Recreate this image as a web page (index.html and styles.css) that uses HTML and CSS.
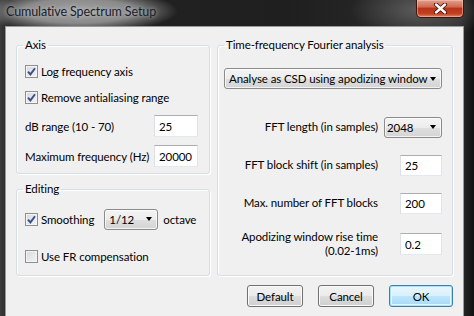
FILE: index.html
```html
<!DOCTYPE html>
<html lang="en">
<head>
    <meta charset="UTF-8">
    <title>Cumulative Spectrum Setup</title>
    <link rel="stylesheet" href="styles.css">
</head>
<body>
    <div class="window">
        <div class="titlebar">
            <span class="title">Cumulative Spectrum Setup</span>
            <div class="close">
                <svg width="15" height="11" viewBox="0 0 15 11">
                    <path d="M3 1.5 L12 9.5 M12 1.5 L3 9.5" stroke="#4a1208" stroke-width="4.2" stroke-linecap="round"/>
                    <path d="M3 1.5 L12 9.5 M12 1.5 L3 9.5" stroke="#fff" stroke-width="2.4" stroke-linecap="round"/>
                </svg>
            </div>
        </div>

        <div class="client">
            <div class="groups">
                <div class="left-col">
                    <fieldset class="group">
                        <legend>Axis</legend>
                        <div class="axis-body">
                            <div class="check-row">
                                <span class="check on"><svg width="9" height="9" viewBox="0 0 9 9"><path d="M1 4.6 L3.4 7.4 L8 1.2" fill="none" stroke="#3b4f86" stroke-width="1.9"/></svg></span>
                                <span>Log frequency axis</span>
                            </div>
                            <div class="check-row">
                                <span class="check on"><svg width="9" height="9" viewBox="0 0 9 9"><path d="M1 4.6 L3.4 7.4 L8 1.2" fill="none" stroke="#3b4f86" stroke-width="1.9"/></svg></span>
                                <span>Remove antialiasing range</span>
                            </div>
                            <div class="field-rows">
                                <div class="field-row">
                                    <span>dB range (10 - 70)</span>
                                    <input class="text wide" type="text" value="25">
                                </div>
                                <div class="field-row">
                                    <span>Maximum frequency (Hz)</span>
                                    <input class="text wide" type="text" value="20000">
                                </div>
                            </div>
                        </div>
                    </fieldset>

                    <fieldset class="group">
                        <legend>Editing</legend>
                        <div class="edit-body">
                            <div class="check-row">
                                <span class="check on"><svg width="9" height="9" viewBox="0 0 9 9"><path d="M1 4.6 L3.4 7.4 L8 1.2" fill="none" stroke="#3b4f86" stroke-width="1.9"/></svg></span>
                                <span>Smoothing</span>
                                <div class="combo smooth"><span>1/12</span><span class="arrow"></span></div>
                                <span>octave</span>
                            </div>
                            <div class="check-row">
                                <span class="check"></span>
                                <span>Use FR compensation</span>
                            </div>
                        </div>
                    </fieldset>
                </div>

                <fieldset class="group">
                    <legend>Time-frequency Fourier analysis</legend>
                    <div class="fft-body">
                        <div class="combo"><span>Analyse as CSD using apodizing window</span><span class="arrow"></span></div>
                        <div class="fft-grid">
                            <span class="label">FFT length (in samples)</span>
                            <div class="combo length"><span>2048</span><span class="arrow"></span></div>

                            <span class="label">FFT block shift (in samples)</span>
                            <input class="text" type="text" value="25">

                            <span class="label">Max. number of FFT blocks</span>
                            <input class="text" type="text" value="200">

                            <span class="label">Apodizing window rise time<br>(0.02-1ms)</span>
                            <input class="text tall" type="text" value="0.2">
                        </div>
                    </div>
                </fieldset>
            </div>

            <div class="buttons">
                <button class="btn">Default</button>
                <button class="btn">Cancel</button>
                <button class="btn default">OK</button>
            </div>
        </div>
    </div>
</body>
</html>
```

FILE: styles.css
```css
body {
    margin: 0;
    background: #0c0c0c;
    font-family: Lato, "Open Sans", sans-serif;
    font-size: 11.5px;
    letter-spacing: -0.1px;
    color: #000;
}
.window {
    width: 474px;
    height: 316px;
    box-sizing: border-box;
    padding: 0 10px 0 5px;
    overflow: hidden;
    background:
        radial-gradient(ellipse 100px 22px at 78px 11px, #a4a4a4, #8a8a8a 55%, rgba(70, 70, 70, 0) 100%),
        radial-gradient(ellipse 70px 30px at 420px 10px, #5c5c5c, rgba(80, 80, 80, 0) 100%),
        linear-gradient(90deg, #3c3c3c, #232323 2%, #1f1f1f 60%, #2c2c2c 97%, #111);
}
.titlebar {
    height: 26px;
    display: flex;
    align-items: flex-start;
    padding-left: 1px;
}
.title {
    margin-top: 2px;
    font-size: 12.5px;
    line-height: 20px;
    white-space: nowrap;
    color: #18202c;
    text-shadow: 0 0 4px rgba(230, 230, 230, 0.7);
}
.close {
    margin-left: auto;
    width: 48px;
    height: 18px;
    box-sizing: border-box;
    border: 1px solid #40150c;
    border-top: none;
    border-radius: 0 0 5px 5px;
    background: linear-gradient(#e3a08f, #cf6a52 40%, #b8331a 50%, #c3401f 80%, #e2826a);
    box-shadow: inset 0 0 0 1px rgba(255, 210, 200, 0.45);
    display: flex;
    align-items: center;
    justify-content: center;
}
.client {
    height: 290px;
    box-sizing: border-box;
    background: #f0f0f0;
    border: 1px solid #9a9a9a;
    border-bottom: none;
    padding: 11px 10px 0 10px;
}
.groups {
    display: grid;
    grid-template-columns: 194px 236px;
    column-gap: 7px;
}
.left-col {
    display: flex;
    flex-direction: column;
    gap: 8px;
}
.group {
    margin: 0;
    padding: 0;
    min-width: 0;
    border: 1px solid #d5dfe5;
    border-radius: 3px;
    box-shadow: inset 1px 1px 0 #fff, 1px 1px 0 #fff;
}
.group legend {
    margin-left: 6px;
    padding: 0 2px;
    line-height: 14px;
}
.axis-body {
    padding: 6px 11px 2px 8px;
}
.edit-body {
    padding: 10px 11px 6px 8px;
    display: flex;
    flex-direction: column;
    gap: 11px;
}
.check-row {
    height: 26px;
    display: flex;
    align-items: center;
    gap: 3px;
    white-space: nowrap;
}
.check {
    width: 13px;
    height: 13px;
    box-sizing: border-box;
    border: 1px solid #8e8f8f;
    background: linear-gradient(135deg, #d6d9de, #f4f4f4);
    box-shadow: inset 0 0 0 1px #f4f4f4;
    display: flex;
    align-items: center;
    justify-content: center;
}
.field-rows {
    margin-top: 1px;
}
.field-row {
    height: 30px;
    display: flex;
    align-items: center;
    justify-content: space-between;
    white-space: nowrap;
}
.text {
    width: 42px;
    height: 21px;
    box-sizing: border-box;
    margin: 0;
    padding: 0 4px;
    border: 1px solid;
    border-color: #abadb3 #e2e3ea #e3e9ef #dbdfe6;
    background: #fff;
    font: inherit;
    letter-spacing: inherit;
    color: #000;
}
.text.wide {
    width: 44px;
    height: 22px;
}
.text.tall {
    height: 22px;
}
.combo {
    height: 21px;
    box-sizing: border-box;
    display: flex;
    align-items: center;
    justify-content: space-between;
    padding: 0 5px 0 4px;
    border: 1px solid #8b8b8b;
    border-radius: 3px;
    background: linear-gradient(#f4f4f4, #ececec 50%, #dfdfdf 51%, #d4d4d4);
    box-shadow: inset 0 0 0 1px rgba(255, 255, 255, 0.7);
    white-space: nowrap;
}
.arrow {
    width: 0;
    height: 0;
    border-left: 3.5px solid transparent;
    border-right: 3.5px solid transparent;
    border-top: 4px solid #000;
}
.combo.smooth {
    width: 54px;
    margin-left: 7px;
    margin-right: 2px;
}
.fft-body {
    padding: 16px 10px 0 6px;
}
.fft-grid {
    margin-top: 27px;
    display: grid;
    grid-template-columns: 1fr 58px;
    grid-auto-rows: minmax(22px, auto);
    column-gap: 6px;
    row-gap: 16px;
    align-items: center;
    justify-items: end;
}
.fft-grid .label {
    text-align: right;
    line-height: 14px;
    white-space: nowrap;
}
.combo.length {
    width: 58px;
    padding-left: 2px;
}
.buttons {
    margin-top: 9px;
    display: flex;
    justify-content: flex-end;
    gap: 15px;
    width: 437px;
}
.btn {
    width: 56px;
    height: 22px;
    box-sizing: border-box;
    border: 1px solid #707070;
    border-radius: 3px;
    background: linear-gradient(#f2f2f2, #ebebeb 50%, #dddddd 51%, #cfcfcf);
    box-shadow: inset 0 0 0 1px #fbfbfb;
    font: inherit;
    letter-spacing: inherit;
    color: #000;
    padding: 0;
}
.btn.default {
    width: 64px;
    border-color: #3c7fb1;
    background: linear-gradient(#eaf6fd, #d9f0fc 50%, #bee6fd 51%, #a7d9f5);
    box-shadow: inset 0 0 0 1px #a6e0fa, inset 0 0 0 2px #e8f6fd;
}
```
